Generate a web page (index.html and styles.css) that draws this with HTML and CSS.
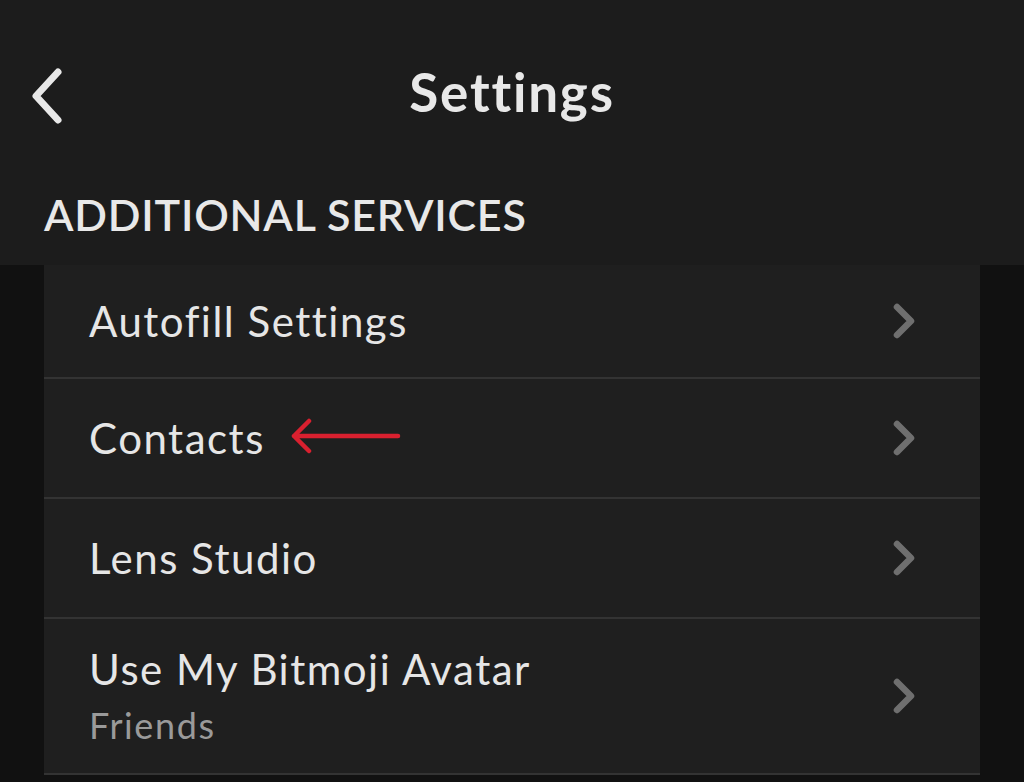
FILE: index.html
```html
<!DOCTYPE html>
<html lang="en">
<head>
<meta charset="utf-8">
<title>Settings</title>
<link rel="stylesheet" href="styles.css">
</head>
<body>
<div class="page">
  <header class="top">
    <div class="navbar">
      <button class="back" aria-label="Back">
        <svg width="40" height="60" viewBox="0 0 40 60"><path d="M29 6 L7 30 L29 54" fill="none" stroke="#e8e8e8" stroke-width="7" stroke-linecap="round" stroke-linejoin="round"/></svg>
      </button>
      <h1 class="title">Settings</h1>
    </div>
    <div class="section-title">ADDITIONAL SERVICES</div>
  </header>
  <ul class="list">
    <li class="row">
      <div class="text"><span class="label">Autofill Settings</span></div>
      <svg class="chev" width="30" height="40" viewBox="0 0 30 40"><path d="M8 6 L22 20 L8 34" fill="none" stroke="#6f6f6f" stroke-width="6.5" stroke-linecap="round" stroke-linejoin="round"/></svg>
    </li>
    <li class="row">
      <div class="text">
        <span class="label">Contacts</span>
        <svg class="arrow" width="112" height="40" viewBox="0 0 112 40"><path d="M108 18 H4 M4 18 L19 3 M4 18 L19 33" fill="none" stroke="#d9202f" stroke-width="4.5" stroke-linecap="round" stroke-linejoin="round"/></svg>
      </div>
      <svg class="chev" width="30" height="40" viewBox="0 0 30 40"><path d="M8 6 L22 20 L8 34" fill="none" stroke="#6f6f6f" stroke-width="6.5" stroke-linecap="round" stroke-linejoin="round"/></svg>
    </li>
    <li class="row">
      <div class="text"><span class="label">Lens Studio</span></div>
      <svg class="chev" width="30" height="40" viewBox="0 0 30 40"><path d="M8 6 L22 20 L8 34" fill="none" stroke="#6f6f6f" stroke-width="6.5" stroke-linecap="round" stroke-linejoin="round"/></svg>
    </li>
    <li class="row tall">
      <div class="text stack">
        <span class="label">Use My Bitmoji Avatar</span>
        <span class="sub">Friends</span>
      </div>
      <svg class="chev" width="30" height="40" viewBox="0 0 30 40"><path d="M8 6 L22 20 L8 34" fill="none" stroke="#6f6f6f" stroke-width="6.5" stroke-linecap="round" stroke-linejoin="round"/></svg>
    </li>
  </ul>
</div>
</body>
</html>
```

FILE: styles.css
```css
* { box-sizing: border-box; }
html, body {
  margin: 0;
  padding: 0;
  background: #111111;
  height: 100%;
  overflow: hidden;
}
body {
  font-family: "Lato", "Noto Sans", sans-serif;
  color: #e8e8e8;
}
.page {
  width: 1024px;
}
.top {
  background: #1c1c1c;
  height: 265px;
  display: flex;
  flex-direction: column;
}
.navbar {
  position: relative;
  height: 150px;
  display: flex;
  align-items: flex-start;
  justify-content: center;
  padding-top: 60px;
}
.back {
  position: absolute;
  left: 29px;
  top: 66px;
  background: none;
  border: 0;
  padding: 0;
  display: flex;
}
.title {
  margin: 0;
  font-size: 53px;
  font-weight: 700;
  letter-spacing: 1.8px;
  color: #e8e8e8;
}
.section-title {
  padding-left: 44px;
  font-size: 43px;
  font-weight: 600;
  letter-spacing: 0.8px;
  color: #e8e8e8;
  line-height: 1;
  margin-top: 43px;
}
.list {
  list-style: none;
  margin: 0 44px;
  padding: 0;
  background: #1f1f1f;
}
.row {
  height: 120px;
  border-bottom: 2px solid #333333;
  display: flex;
  align-items: center;
  justify-content: space-between;
  padding: 0 61px 0 45px;
}
.row:first-child {
  height: 114px;
}
.row.tall {
  height: 156px;
}
.text {
  display: flex;
  align-items: center;
  gap: 25px;
}
.text.stack {
  flex-direction: column;
  align-items: flex-start;
  gap: 14px;
  margin-top: 0;
}
.label {
  font-size: 42px;
  font-weight: 400;
  letter-spacing: 1.5px;
  color: #e6e6e6;
  line-height: 1.1;
}
.sub {
  font-size: 36px;
  letter-spacing: 1.6px;
  color: #9a9a9a;
  line-height: 1.1;
}
.chev {
  display: block;
}
```
